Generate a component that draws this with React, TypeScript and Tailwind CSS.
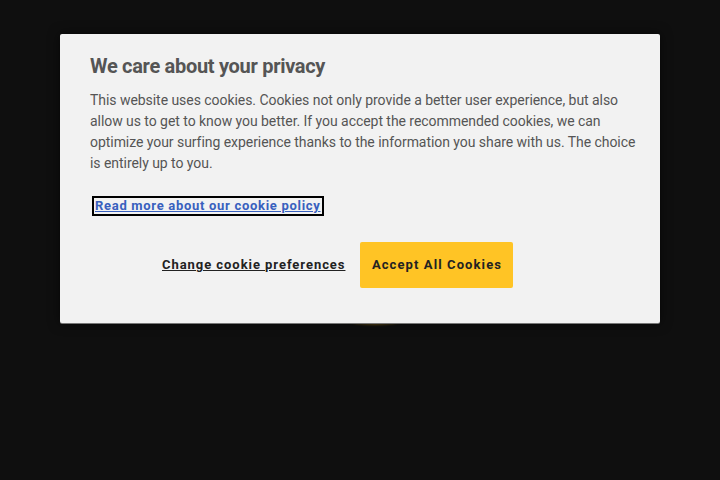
export default function App() {
  return (
    <div className="relative w-[720px] h-[480px] bg-[#0f0f0f] overflow-hidden" style={{ fontFamily: "Roboto, 'Noto Sans', sans-serif" }}>
      <div className="absolute left-[340px] top-[306px] w-[70px] h-[19px] rounded-[50%] bg-[#5e4812] blur-[1px]" />
      <div className="absolute left-[60px] top-[34px] w-[600px] h-[289px] bg-[#f2f2f2] rounded-[2px] shadow-[0_1px_0_#777,0_0_12px_rgba(0,0,0,0.6)] pl-[30px] pr-[10px] pt-[19px]">
        <h2 className="text-[20px] leading-[26px] font-bold text-[#555555] tracking-[-0.3px]">We care about your privacy</h2>
        <p className="mt-[11px] text-[14px] leading-[21px] text-[#555555] tracking-[-0.05px] whitespace-nowrap">
          This website uses cookies. Cookies not only provide a better user experience, but also<br />
          allow us to get to know you better. If you accept the recommended cookies, we can<br />
          optimize your surfing experience thanks to the information you share with us. The choice<br />
          is entirely up to you.
        </p>
        <div className="mt-[19px] ml-[2px]">
          <a href="#" className="inline-block border-2 border-black px-[1px] text-[13px] leading-[16px] font-bold text-[#3860be] underline tracking-[0.7px]">Read more about our cookie policy</a>
        </div>
        <div className="mt-[25px] flex items-center">
          <a href="#" className="ml-[72px] text-[13px] font-bold text-[#222222] underline tracking-[0.95px]">Change cookie preferences</a>
          <button className="ml-[15px] w-[153px] h-[46px] bg-[#ffc425] rounded-[2px] text-[13px] font-bold text-[#222222] tracking-[1.1px]">Accept All Cookies</button>
        </div>
      </div>
    </div>
  );
}
